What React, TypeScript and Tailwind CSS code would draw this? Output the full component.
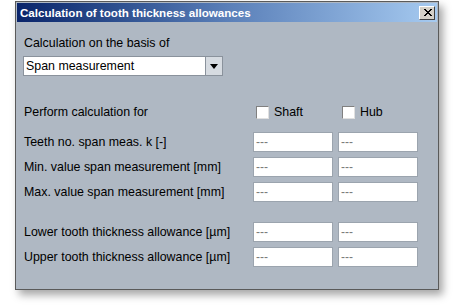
import React from 'react';

const Field = () => (
  <div className="w-[80px] h-[20px] bg-white border border-[#9ba4ae] flex items-center pl-[2px] text-[12px] text-[#7a7a7a] leading-none">
    ---
  </div>
);

const Row = ({ label }: { label: string }) => (
  <div className="flex items-center h-[20px]">
    <span className="w-[236px] pl-[7px]">{label}</span>
    <Field />
    <div className="w-[5px]" />
    <Field />
  </div>
);

const Check = ({ label }: { label: string }) => (
  <label className="flex items-center gap-[5px]">
    <span className="w-[13px] h-[13px] bg-white border border-[#808080] border-r-[#e0e0e0] border-b-[#e0e0e0]" />
    <span>{label}</span>
  </label>
);

const App = () => {
  return (
    <div className="w-[455px] h-[305px] bg-white pl-[15px] pt-[1px] overflow-hidden" style={{ fontFamily: '"Liberation Sans", Arial, sans-serif' }}>
      <div className="w-[424px] h-[289px] border border-[#5a5a5a] bg-[#afb8c3] flex flex-col shadow-[4px_5px_8px_rgba(0,0,0,0.35)] p-[1px] text-[12.4px] text-black">
        <div className="h-[19px] flex items-center justify-between pl-[3px] pr-[2px] bg-gradient-to-r from-[#0a246a] via-[#5a7fb8] to-[#a6caf0]">
          <span className="text-white font-bold text-[11.6px]">Calculation of tooth thickness allowances</span>
          <button className="w-[16px] h-[14px] bg-[#d4d0c8] border border-white border-r-[#404040] border-b-[#404040] flex items-center justify-center">
            <svg width="9" height="8" viewBox="0 0 9 8">
              <path d="M1 0 L8 7 M8 0 L1 7 M2 0 L9 7 M9 0 L2 7" stroke="black" strokeWidth="1" fill="none" />
            </svg>
          </button>
        </div>
        <div className="flex flex-col">
          <div className="pl-[7px] mt-[14px] h-[14px] leading-[14px]">Calculation on the basis of</div>
          <div className="ml-[6px] mt-[6px] flex w-[200px] h-[20px] border border-[#8a929c]">
            <div className="flex-1 bg-white flex items-center pl-[2px]">Span measurement</div>
            <div className="w-[17px] bg-[#d6dbe1] border-l border-[#8a929c] flex items-center justify-center">
              <svg width="8" height="5" viewBox="0 0 8 5"><path d="M0 0 H8 L4 5 Z" fill="black" /></svg>
            </div>
          </div>
          <div className="flex items-center mt-[29px] h-[14px]">
            <span className="w-[239px] pl-[7px]">Perform calculation for</span>
            <div className="w-[86px]"><Check label="Shaft" /></div>
            <Check label="Hub" />
          </div>
          <div className="mt-[13px] flex flex-col gap-[5px]">
            <Row label="Teeth no. span meas. k [-]" />
            <Row label="Min. value span measurement [mm]" />
            <Row label="Max. value span measurement [mm]" />
          </div>
          <div className="mt-[20px] flex flex-col gap-[5px]">
            <Row label="Lower tooth thickness allowance [µm]" />
            <Row label="Upper tooth thickness allowance [µm]" />
          </div>
        </div>
      </div>
    </div>
  );
};

export default App;
